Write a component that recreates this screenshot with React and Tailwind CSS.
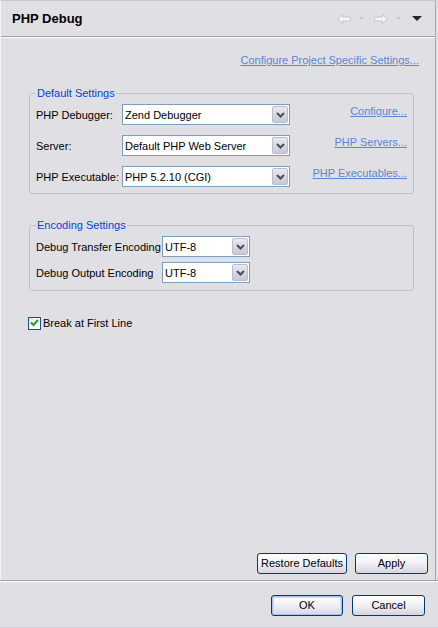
import React from 'react';

const Chevron = () => (
  <svg width="9" height="6" viewBox="0 0 9 6">
    <path d="M1 1 L4.5 4.5 L8 1" fill="none" stroke="#4d4d4d" strokeWidth="2" />
  </svg>
);

const Combo = ({ value, width }) => (
  <div className={`flex h-[21px] ${width} border border-[#7f9db9] bg-white`}>
    <div className="flex flex-1 items-center pl-[2px] text-black">{value}</div>
    <div className="m-[1px] flex w-[16px] items-center justify-center rounded-[2px] border border-[#b9bccd] bg-gradient-to-b from-[#e9e9f1] to-[#c9c8d8]">
      <Chevron />
    </div>
  </div>
);

const Button = ({ children, width, isDefault }) => (
  <button
    className={`h-[21px] ${width} rounded-[3px] border border-[#003c74] bg-gradient-to-b from-white via-[#f1f0f4] to-[#d6d4e0] text-[11px] leading-none text-black ${
      isDefault ? 'shadow-[inset_0_0_0_1px_#a8c2ef,inset_0_0_0_2px_#cfdcf6]' : ''
    }`}
  >
    {children}
  </button>
);

const NavArrow = ({ flip }) => (
  <svg width="14" height="10" viewBox="0 0 14 10" className={flip ? 'scale-x-[-1]' : ''}>
    <path d="M0.5 5 L5.5 0.5 V3 H13.5 V7 H5.5 V9.5 Z" fill="#f4f4f6" stroke="#c6c6cc" strokeLinejoin="round" />
  </svg>
);

const SmallDrop = ({ color = '#c6c6cc', w = 5, h = 3 }) => (
  <svg width={w} height={h} viewBox={`0 0 ${w} ${h}`}>
    <polygon points={`0,0 ${w},0 ${w / 2},${h}`} fill={color} />
  </svg>
);

const Link = ({ children }) => (
  <span className="cursor-pointer text-[#5b86d2] underline underline-offset-[1px]">{children}</span>
);

const App = () => {
  const defaultRows = [
    { label: 'PHP Debugger:', value: 'Zend Debugger', link: 'Configure...' },
    { label: 'Server:', value: 'Default PHP Web Server', link: 'PHP Servers...' },
    { label: 'PHP Executable:', value: 'PHP 5.2.10 (CGI)', link: 'PHP Executables...' },
  ];

  return (
    <div className="flex h-[628px] w-[438px] flex-col bg-[#e0dfe4] font-['Liberation_Sans',Arial,sans-serif] text-[11px] leading-[14px] text-black">
      {/* Preference page */}
      <div className="mr-[2px] flex flex-1 flex-col border-t border-r border-l border-t-[#c5cad6] border-r-[#a9a9ae] border-l-[#f3f3f6]">
        {/* Header */}
        <div className="flex h-[36px] items-center justify-between border-b border-[#9e9ea2] pl-[11px] pr-[13px]">
          <h1 className="text-[13px] font-bold">PHP Debug</h1>
          <div className="flex items-center">
            <NavArrow />
            <div className="ml-[8px] mr-[10px]"><SmallDrop /></div>
            <NavArrow flip />
            <div className="ml-[8px] mr-[11px]"><SmallDrop /></div>
            <SmallDrop color="#1e2638" w={10} h={5} />
          </div>
        </div>
        <div className="flex flex-1 flex-col border-t border-white">
          <div className="mt-[15px] flex justify-end pr-[16px]">
            <Link>Configure Project Specific Settings...</Link>
          </div>

          {/* Default Settings */}
          <fieldset className="ml-[28px] mr-[21px] mt-[19px] rounded-[3px] border border-[#c2c0c8] pb-[6px] pl-[6px] pr-[6px]">
            <legend className="px-[1px] text-[#0046d5]">Default Settings</legend>
            <div className="mt-[4px] flex flex-col gap-[10px]">
              {defaultRows.map((row) => (
                <div key={row.label} className="flex items-center">
                  <div className="w-[86px]">{row.label}</div>
                  <Combo value={row.value} width="w-[168px]" />
                  <div className="-mt-[7px] flex flex-1 justify-end">
                    <Link>{row.link}</Link>
                  </div>
                </div>
              ))}
            </div>
          </fieldset>

          {/* Encoding Settings */}
          <fieldset className="ml-[28px] mr-[21px] mt-[24px] rounded-[3px] border border-[#c2c0c8] pb-[7px] pl-[6px] pr-[6px]">
            <legend className="px-[1px] text-[#0046d5]">Encoding Settings</legend>
            <div className="mt-[4px] flex flex-col gap-[5px]">
              {['Debug Transfer Encoding', 'Debug Output Encoding'].map((label) => (
                <div key={label} className="flex items-center">
                  <div className="w-[126px]">{label}</div>
                  <Combo value="UTF-8" width="w-[88px]" />
                </div>
              ))}
            </div>
          </fieldset>

          {/* Break at first line */}
          <label className="ml-[27px] mt-[25px] flex items-center gap-[2px]">
            <span className="flex h-[13px] w-[13px] items-center justify-center border border-[#1c5180] bg-gradient-to-br from-[#dcdcd7] via-white to-white">
              <svg width="9" height="8" viewBox="0 0 9 8">
                <path d="M1 3.5 L3.5 6 L8 1" fill="none" stroke="#21a121" strokeWidth="2" />
              </svg>
            </span>
            <span>Break at First Line</span>
          </label>

          <div className="flex-1" />

          <div className="flex justify-end gap-[8px] pb-[6px] pr-[7px]">
            <Button width="w-[90px]">Restore Defaults</Button>
            <Button width="w-[73px]">Apply</Button>
          </div>
        </div>
      </div>

      {/* Dialog buttons */}
      <div className="flex h-[48px] flex-col border-t border-[#9e9ea2]">
        <div className="flex flex-1 items-start justify-end gap-[9px] border-t border-b border-t-white border-b-[#cfcfe6] pr-[13px] pt-[13px]">
          <Button width="w-[72px]" isDefault>OK</Button>
          <Button width="w-[73px]">Cancel</Button>
        </div>
      </div>
    </div>
  );
};

export default App;
